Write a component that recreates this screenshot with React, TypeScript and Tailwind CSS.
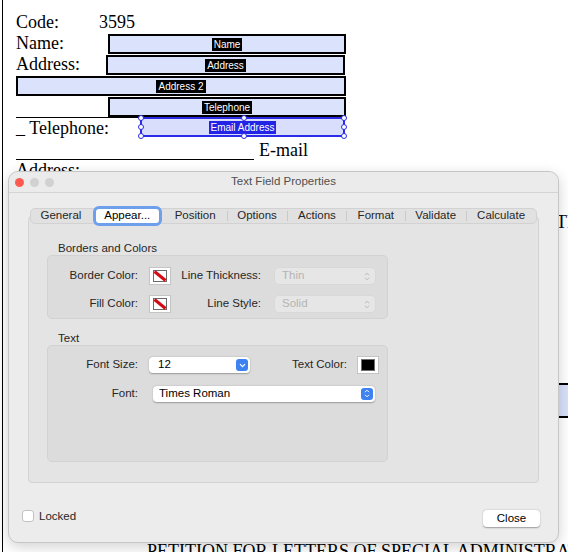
import React from 'react';

const sans = "font-['Liberation_Sans',Arial,sans-serif]";

function FieldTag({ children, blue }: { children: React.ReactNode; blue?: boolean }) {
  return (
    <span
      className={`${sans} px-[2px] text-[10px] leading-[13px] text-white ${blue ? 'bg-[#2323e6]' : 'bg-black'}`}
    >
      {children}
    </span>
  );
}

function Field({ className, label }: { className: string; label: string }) {
  return (
    <div className={`flex items-center justify-center border-2 border-black bg-[#dbe2fc] ${className}`}>
      <FieldTag>{label}</FieldTag>
    </div>
  );
}

function Handle({ className }: { className: string }) {
  return (
    <span className={`absolute h-[6px] w-[6px] rounded-full border border-[#2a2ae8] bg-white ${className}`} />
  );
}

function NoColorSwatch() {
  return (
    <div className="flex h-[18px] w-[22px] items-center justify-center border border-[#c4c4c4] bg-white">
      <svg width="14" height="12" viewBox="0 0 14 12">
        <rect x="0.5" y="0.5" width="13" height="11" fill="#fff" stroke="#6a6a6a" />
        <line x1="1.5" y1="1.5" x2="12.5" y2="10.5" stroke="#d40a14" strokeWidth="3" />
      </svg>
    </div>
  );
}

function UpDown({ color = '#b8b8b8' }: { color?: string }) {
  return (
    <svg width="6" height="9" viewBox="0 0 6 9">
      <path d="M1 3.2 L3 1.2 L5 3.2" fill="none" stroke={color} strokeWidth="1" />
      <path d="M1 5.8 L3 7.8 L5 5.8" fill="none" stroke={color} strokeWidth="1" />
    </svg>
  );
}

function DisabledSelect({ value }: { value: string }) {
  return (
    <div className="flex h-[16px] w-[100px] items-center justify-between rounded-[4px] bg-[#e6e6e6] pl-[7px] pr-[5px] shadow-[0_0_0_0.5px_#d4d4d4]">
      <span className="leading-none text-[#b4b4b4]">{value}</span>
      <UpDown />
    </div>
  );
}

function BlueArrow({ double }: { double?: boolean }) {
  return (
    <span className="flex h-[12px] w-[12px] items-center justify-center rounded-[3px] bg-[#3d82f0]">
      {double ? (
        <UpDown color="#fff" />
      ) : (
        <svg width="7" height="5" viewBox="0 0 7 5">
          <path d="M1 1.2 L3.5 3.7 L6 1.2" fill="none" stroke="#fff" strokeWidth="1.2" />
        </svg>
      )}
    </span>
  );
}

const tabs = [
  { name: 'General', w: 'w-[60px]' },
  { name: 'Appear...', w: 'w-[73px]', active: true },
  { name: 'Position', w: 'w-[63px]' },
  { name: 'Options', w: 'w-[61px]', sep: true },
  { name: 'Actions', w: 'w-[59px]', sep: true },
  { name: 'Format', w: 'w-[59px]', sep: true },
  { name: 'Validate', w: 'w-[61px]', sep: true },
  { name: 'Calculate', w: 'w-[70px]', sep: true },
];

function Dialog() {
  return (
    <div
      className={`${sans} absolute left-[8px] top-[171px] flex h-[372px] w-[551px] flex-col rounded-[10px] border border-[#c6c6c6] bg-[#ececec] text-[11.5px] text-[#262626] shadow-[0_4px_14px_rgba(0,0,0,0.18)]`}
    >
      <div className="relative flex h-[21px] items-center justify-center rounded-t-[10px] border-b border-[#d4d4d4] bg-[#ebebeb]">
        <div className="absolute left-[6px] top-[6px] flex gap-[6px]">
          <span className="h-[9px] w-[9px] rounded-full bg-[#fd5b52]" />
          <span className="h-[9px] w-[9px] rounded-full bg-[#d1d1d1]" />
          <span className="h-[9px] w-[9px] rounded-full bg-[#d1d1d1]" />
        </div>
        <span className="text-[11.5px] text-[#4f4f4f]">Text Field Properties</span>
      </div>

      <div className="flex flex-col px-[19px] pt-[15px]">
        <div className="relative z-10 mx-[2px] flex h-[16px] items-center rounded-[5px] border border-[#d2d2d2] bg-[#e1e1e1]">
          {tabs.map((t) =>
            t.active ? (
              <div key={t.name} className={`flex ${t.w} justify-center`}>
                <div className="flex h-[20px] w-[69px] items-center justify-center rounded-[6px] border-[3px] border-[#6e9fea] bg-white text-black">
                  {t.name}
                </div>
              </div>
            ) : (
              <div key={t.name} className={`relative flex ${t.w} items-center justify-center`}>
                {t.sep && <span className="absolute left-0 h-[10px] w-px bg-[#c9c9c9]" />}
                {t.name}
              </div>
            )
          )}
        </div>

        <div className="-mt-[8px] flex h-[267px] flex-col rounded-[4px] border border-[#d3d3d3] bg-[#e4e4e4] px-[18px] pt-[24px]">
          <div className="pl-[11px] leading-[14px]">Borders and Colors</div>
          <div className="flex h-[64px] w-[341px] flex-col gap-[10px] rounded-[5px] border border-[#d2d2d2] bg-[#dcdcdc] pt-[11px]">
            <div className="flex items-center">
              <span className="w-[90px] text-right">Border Color:</span>
              <span className="ml-[11px]"><NoColorSwatch /></span>
              <span className="w-[90px] text-right">Line Thickness:</span>
              <span className="ml-[14px]"><DisabledSelect value="Thin" /></span>
            </div>
            <div className="flex items-center">
              <span className="w-[90px] text-right">Fill Color:</span>
              <span className="ml-[11px]"><NoColorSwatch /></span>
              <span className="w-[90px] text-right">Line Style:</span>
              <span className="ml-[14px]"><DisabledSelect value="Solid" /></span>
            </div>
          </div>

          <div className="mt-[12px] pl-[11px] leading-[14px]">Text</div>
          <div className="flex h-[117px] w-[341px] flex-col gap-[11px] rounded-[5px] border border-[#d2d2d2] bg-[#dcdcdc] pt-[10px]">
            <div className="flex items-center">
              <span className="w-[90px] text-right">Font Size:</span>
              <div className="ml-[11px] flex h-[16px] w-[101px] items-center justify-between rounded-[4px] bg-white pl-[9px] pr-[2px] shadow-[0_0.5px_1.5px_rgba(0,0,0,0.3)]">
                <span className="text-black">12</span>
                <BlueArrow />
              </div>
              <span className="w-[97px] text-right">Text Color:</span>
              <div className="ml-[10px] flex h-[18px] w-[22px] items-center justify-center border border-[#c4c4c4] bg-white">
                <span className="h-[12px] w-[14px] border border-[#6f6f6f] bg-black" />
              </div>
            </div>
            <div className="flex items-center">
              <span className="w-[90px] text-right">Font:</span>
              <div className="ml-[15px] flex h-[16px] w-[222px] items-center justify-between rounded-[4px] bg-white pl-[6px] pr-[2px] shadow-[0_0.5px_1.5px_rgba(0,0,0,0.3)]">
                <span className="text-black">Times Roman</span>
                <BlueArrow double />
              </div>
            </div>
          </div>
        </div>
      </div>

      <div className="mt-[27px] flex items-start justify-between pl-[13px] pr-[18px]">
        <div className="flex items-center gap-[5px] pt-[0px]">
          <span className="h-[12px] w-[12px] rounded-[3px] border border-[#c2c2c2] bg-white" />
          <span className="leading-[12px]">Locked</span>
        </div>
        <button className="flex h-[17px] w-[57px] items-center justify-center rounded-[4px] bg-white text-black shadow-[0_0.5px_1.5px_rgba(0,0,0,0.35)]">
          Close
        </button>
      </div>
    </div>
  );
}

export default function App() {
  return (
    <div className="relative h-[552px] w-[568px] overflow-hidden bg-white">
      <div className="ml-[2px] h-full overflow-hidden border-l-[1.5px] border-black">
        <div className="pl-[13px] pt-[12px] font-['Liberation_Serif','Times_New_Roman',serif] text-[18px] leading-[21px] text-black">
          <div className="flex h-[21px] items-center">
            <span className="w-[83px]">Code:</span>
            <span>3595</span>
          </div>
          <div className="flex h-[21px] items-end">
            <span className="absolute">Name:</span>
            <Field className="ml-[92px] h-[20px] w-[238px]" label="Name" />
          </div>
          <div className="flex h-[21px] items-end">
            <span className="absolute">Address:</span>
            <Field className="ml-[90px] h-[20px] w-[239px]" label="Address" />
          </div>
          <div className="flex h-[21px] items-end">
            <Field className="h-[20px] w-[330px]" label="Address 2" />
          </div>
          <div className="flex h-[21px] items-end">
            <Field className="ml-[92px] h-[20px] w-[238px]" label="Telephone" />
          </div>
          <div className="flex h-[21px] items-start">
            <span className="h-[21px] w-[124px] border-t border-black leading-[20px]">_ Telephone:</span>
            <div className="relative flex h-[20px] w-[205px] items-center justify-center border-2 border-[#2a2ae8] bg-[#d8defb]">
              <FieldTag blue>Email Address</FieldTag>
              <Handle className="-left-[4px] -top-[4px]" />
              <Handle className="left-[99px] -top-[4px]" />
              <Handle className="-right-[4px] -top-[4px]" />
              <Handle className="-left-[4px] top-[5px]" />
              <Handle className="-right-[4px] top-[5px]" />
              <Handle className="-bottom-[4px] -left-[4px]" />
              <Handle className="-bottom-[4px] left-[99px]" />
              <Handle className="-bottom-[4px] -right-[4px]" />
            </div>
          </div>
          <div className="flex h-[22px] items-end">
            <span className="h-[22px] w-[238px] border-b border-black" />
            <span className="mb-[-1px] ml-[5px]">E-mail</span>
          </div>
          <div className="h-[21px]">Address:</div>
          <div className="mt-[31px] h-[21px] whitespace-nowrap pl-[529px]">ATE</div>
          <div className="ml-[400px] mt-[150px] h-[35px] w-[300px] border-y-2 border-black bg-[#d9e0fb]" />
          <div className="mt-[123px] h-[21px] whitespace-nowrap pl-[131px]">
            PETITION FOR LETTERS OF SPECIAL ADMINISTRATION
          </div>
        </div>
      </div>
      <Dialog />
    </div>
  );
}
